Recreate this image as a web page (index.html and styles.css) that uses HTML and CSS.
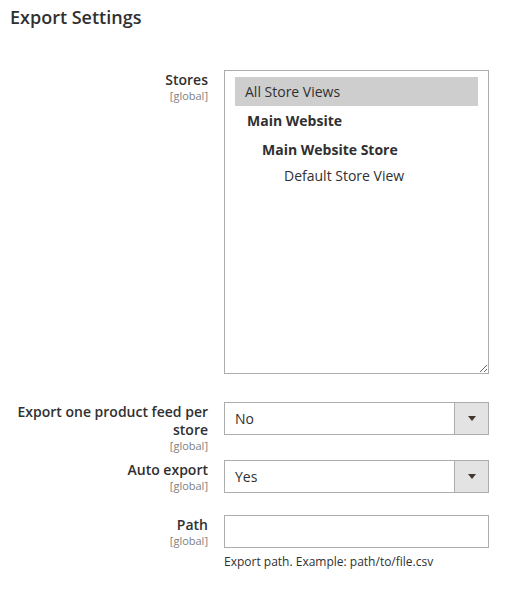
FILE: index.html
```html
<!DOCTYPE html>
<html lang="en">
<head>
<meta charset="utf-8">
<title>Export Settings</title>
<link rel="stylesheet" href="styles.css">
</head>
<body>
<div class="page">
  <h2 class="legend">Export Settings</h2>

  <div class="field field-stores">
    <div class="label">
      <span class="label-text">Stores</span>
      <span class="scope">[global]</span>
    </div>
    <div class="control">
      <div class="multiselect">
        <div class="opt opt-selected">All Store Views</div>
        <div class="opt opt-website">Main Website</div>
        <div class="opt opt-group">Main Website Store</div>
        <div class="opt opt-view">Default Store View</div>
      </div>
    </div>
  </div>

  <div class="field field-feed">
    <div class="label">
      <span class="label-text">Export one product feed per store</span>
      <span class="scope">[global]</span>
    </div>
    <div class="control">
      <div class="select">
        <span class="select-value">No</span>
        <span class="select-button"><span class="caret"></span></span>
      </div>
    </div>
  </div>

  <div class="field field-auto">
    <div class="label">
      <span class="label-text">Auto export</span>
      <span class="scope">[global]</span>
    </div>
    <div class="control">
      <div class="select">
        <span class="select-value">Yes</span>
        <span class="select-button"><span class="caret"></span></span>
      </div>
    </div>
  </div>

  <div class="field field-path">
    <div class="label">
      <span class="label-text">Path</span>
      <span class="scope">[global]</span>
    </div>
    <div class="control">
      <div class="input"></div>
      <p class="note">Export path. Example: path/to/file.csv</p>
    </div>
  </div>
</div>
</body>
</html>
```

FILE: styles.css
```css
html, body {
  margin: 0;
  padding: 0;
  background: #ffffff;
}

body {
  font-family: "Open Sans", "Noto Sans", sans-serif;
  color: #303030;
}

.page {
  padding: 5px 10px 0 10px;
}

.legend {
  margin: 0;
  font-size: 18px;
  line-height: 24px;
  font-weight: 600;
  color: #303030;
}

.field {
  display: grid;
  grid-template-columns: 198px 265px;
  column-gap: 16px;
  align-items: start;
}

.field-stores { margin-top: 41px; }
.field-feed { margin-top: 28px; }
.field-auto { margin-top: 8px; }
.field-path { margin-top: 22px; }

.label {
  text-align: right;
  padding-top: 1px;
}

.label-text {
  display: block;
  font-size: 14px;
  line-height: 18px;
  font-weight: 600;
  color: #303030;
}

.scope {
  display: block;
  font-size: 11px;
  line-height: 13px;
  color: #808080;
}

.multiselect {
  box-sizing: border-box;
  height: 304px;
  border: 1px solid #adadad;
  padding: 6px 10px;
  overflow: auto;
  resize: vertical;
  font-size: 14px;
  color: #303030;
}

.opt {
  line-height: 29px;
  height: 29px;
  white-space: nowrap;
}

.opt-selected {
  background: #cecece;
  padding-left: 10px;
}

.opt-website {
  font-weight: 700;
  padding-left: 12px;
}

.opt-group {
  font-weight: 700;
  padding-left: 27px;
}

.opt-view {
  padding-left: 49px;
  line-height: 23px;
  height: 23px;
}

.select {
  box-sizing: border-box;
  height: 33px;
  border: 1px solid #adadad;
  display: flex;
  align-items: stretch;
  background: #ffffff;
}

.select-value {
  flex: 1;
  padding-left: 10px;
  font-size: 14px;
  line-height: 31px;
  color: #303030;
}

.select-button {
  box-sizing: border-box;
  width: 34px;
  border-left: 1px solid #adadad;
  background: #e3e3e3;
  display: flex;
  align-items: center;
  justify-content: center;
}

.caret {
  width: 0;
  height: 0;
  border-left: 4px solid transparent;
  border-right: 4px solid transparent;
  border-top: 5px solid #41362f;
}

.input {
  box-sizing: border-box;
  height: 33px;
  border: 1px solid #adadad;
  background: #ffffff;
}

.note {
  margin: 5px 0 0 0;
  font-size: 12px;
  line-height: 18px;
  color: #303030;
}
```
